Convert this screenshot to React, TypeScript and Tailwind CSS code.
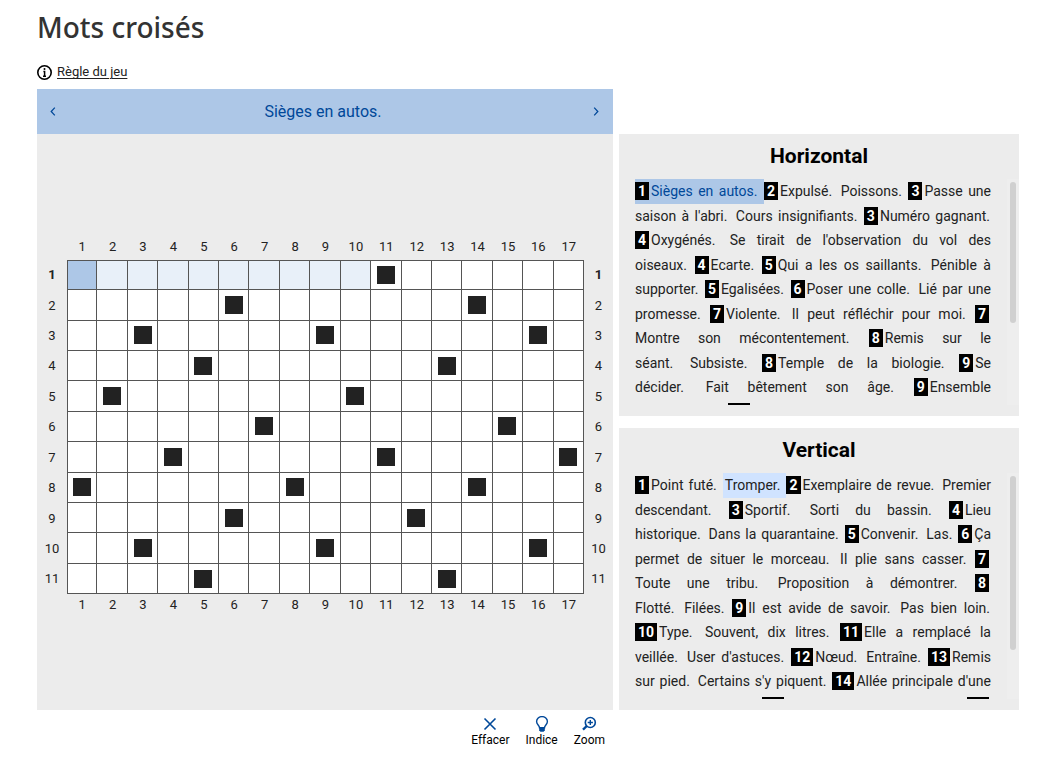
import React, { useState } from "react";

// "keep" holds the number and the first word of a clue on the same line.
type Clue = { n: number; texts: string[]; keep?: boolean };

const horizontal: Clue[] = [
  { n: 1, texts: ["Sièges en autos."] },
  { n: 2, texts: ["Expulsé.", "Poissons."] },
  { n: 3, texts: ["Passe une saison à l'abri.", "Cours insignifiants."] },
  { n: 3, texts: ["Numéro gagnant."] },
  { n: 4, texts: ["Oxygénés.", "Se tirait de l'observation du vol des oiseaux."] },
  { n: 4, texts: ["Ecarte."] },
  { n: 5, texts: ["Qui a les os saillants.", "Pénible à supporter."] },
  { n: 5, texts: ["Egalisées."] },
  { n: 6, texts: ["Poser une colle.", "Lié par une promesse."] },
  { n: 7, texts: ["Violente.", "Il peut réfléchir pour moi."] },
  { n: 7, texts: ["Montre son mécontentement."] },
  { n: 8, texts: ["Remis sur le séant.", "Subsiste."] },
  { n: 8, texts: ["Temple de la biologie."] },
  { n: 9, texts: ["Se décider.", "Fait bêtement son âge."] },
  { n: 9, texts: ["Ensemble d'instruments."] },
  { n: 10, texts: ["Petit cours.", "Mis à sec."] },
];

const vertical: Clue[] = [
  { n: 1, texts: ["Point futé.", "Tromper."] },
  { n: 2, texts: ["Exemplaire de revue.", "Premier descendant."] },
  { n: 3, texts: ["Sportif.", "Sorti du bassin."] },
  { n: 4, texts: ["Lieu historique.", "Dans la quarantaine."] },
  { n: 5, texts: ["Convenir.", "Las."] },
  { n: 6, texts: ["Ça permet de situer le morceau.", "Il plie sans casser."] },
  { n: 7, texts: ["Toute\u00a0une tribu.", "Proposition à démontrer."] },
  { n: 8, texts: ["Flotté.", "Filées."] },
  { n: 9, texts: ["Il est avide de savoir.", "Pas bien loin."] },
  { n: 10, texts: ["Type.", "Souvent, dix litres."], keep: true },
  { n: 11, texts: ["Elle a remplacé la veillée.", "User d'astuces."] },
  { n: 12, texts: ["Nœud.", "Entraîne."] },
  { n: 13, texts: ["Remis sur pied.", "Certains s'y piquent."] },
  { n: 14, texts: ["Allée principale d'une maison.", "Il est dure."] },
  { n: 15, texts: ["Mis en terre.", "Fin de journée."] },
  { n: 16, texts: ["Particulièrement.", "Sujet."] },
];

const COLS = Array.from({ length: 17 }, (_, i) => i + 1);

const blocks: number[][] = [
  [11], [6, 14], [3, 9, 16], [5, 13], [2, 10], [7, 15], [4, 11, 17], [1, 8, 14], [6, 12], [3, 9, 16], [5, 13],
];

function ClueList({ title, clues, active, crossing, thumb }: {
  title: string;
  clues: Clue[];
  active?: string;
  crossing?: string;
  thumb: string;
}) {
  return (
    <section className="flex min-h-0 flex-1 flex-col bg-[#ececec] pb-[11px]">
      <h2 className="pt-2 text-center text-[21px] leading-7 font-bold text-black">{title}</h2>
      <div className="relative mt-[9px] min-h-0 flex-1">
        <div className="absolute inset-0 overflow-hidden pr-7 pl-4">
          <p className="text-justify text-[14px] leading-[1.75] text-[#222]">
            {clues.map((clue, i) => (
              <span key={i} className={clue.texts[0] === active ? "bg-[#adc7e7] py-[5px] text-[#004899]" : ""}>
                <b className="mr-[2px] bg-black px-[3px] py-px font-bold text-white">{clue.n}</b>
                {!clue.keep && <wbr />}
                {clue.texts.map((text, j) => (
                  <span key={j} className={text === crossing ? "bg-[#d0e3ff] py-[5px] pr-px pl-[2px]" : j > 0 ? "pr-px pl-[2px]" : "pr-px"}>
                    {text + (j < clue.texts.length - 1 ? "\u00a0" : " ")}
                  </span>
                ))}
              </span>
            ))}
          </p>
        </div>
        <div className="absolute inset-y-0 right-0 w-3 bg-[#eeeeee]">
          <div className={"mt-[3px] ml-[3px] w-[6px] rounded-full bg-[#d0d0d0] " + thumb} />
        </div>
      </div>
    </section>
  );
}

function ColumnLabels({ className }: { className: string }) {
  return (
    <div className={"grid grid-cols-[30px_repeat(17,minmax(0,1fr))_29px] items-center text-center " + className}>
      <span />
      {COLS.map((c) => <span key={c}>{c}</span>)}
      <span />
    </div>
  );
}

function Board() {
  const [letters, setLetters] = useState<Record<string, string>>({});
  return (
    <div className="pt-1 text-[13px] text-[#222]">
      <ColumnLabels className="h-[26px]" />
      {blocks.map((row, r) => {
        const label = r === 0 ? "text-center font-bold" : "text-center";
        return (
          <div key={r} className="grid grid-cols-[30px_repeat(17,minmax(0,1fr))_29px] items-center">
            <span className={label}>{r + 1}</span>
            {COLS.map((c) => {
              const key = r + "-" + c;
              const edges =
                "flex aspect-square items-center justify-center border-[#555] " +
                (c === 1 ? "border-l " : "") + (r === 0 ? "border-t " : "") + "border-r border-b ";
              if (row.includes(c)) {
                return (
                  <div key={c} className={edges + "bg-white"}>
                    <div className="size-[18px] bg-[#222]" />
                  </div>
                );
              }
              const fill = r === 0 && c === 1 ? "bg-[#adc7e7]" : r === 0 && c < 11 ? "bg-[#e8f0f9]" : "bg-white";
              return (
                <div key={c} className={edges + fill}>
                  <input
                    aria-label={"Ligne " + (r + 1) + ", colonne " + c}
                    maxLength={1}
                    value={letters[key] ?? ""}
                    onChange={(e) => setLetters({ ...letters, [key]: e.target.value.toUpperCase() })}
                    className="size-full bg-transparent text-center text-base outline-none"
                  />
                </div>
              );
            })}
            <span className={label}>{r + 1}</span>
          </div>
        );
      })}
      <ColumnLabels className="h-5" />
    </div>
  );
}

function Chevron({ d }: { d: string }) {
  return (
    <svg viewBox="0 0 6 10" className="h-[9px] w-[6px]" fill="none" stroke="#004899" strokeWidth="1.4">
      <path d={d} />
    </svg>
  );
}

export default function App() {
  return (
    <main className="bg-white pt-[7px] pr-[25px] pl-[37px] font-['Roboto',sans-serif]">
      <h1 className="font-['Noto_Sans',sans-serif] text-[28px] leading-10 font-medium text-[#333]">Mots croisés</h1>
      <a href="#regle" className="mt-[15px] flex h-5 items-center gap-[5px] text-[13px] text-[#222]">
        <svg viewBox="0 0 15 15" className="size-[15px]" fill="none" stroke="#000">
          <circle cx="7.5" cy="7.5" r="6.7" strokeWidth="1.6" />
          <circle cx="7.5" cy="4" r="1" fill="#000" stroke="none" />
          <path d="M6.4 6.4h1.2v5M6 11.3h3" strokeWidth="1.5" />
        </svg>
        <span className="underline underline-offset-2">Règle du jeu</span>
      </a>

      <div className="mt-[7px] grid grid-cols-[minmax(0,576fr)_minmax(0,400fr)] gap-x-[6px]">
        <div className="flex h-[45px] items-center justify-between bg-[#adc7e7] pr-[14px] pl-[13px] text-[#004899]">
          <button type="button" aria-label="Définition précédente"><Chevron d="M5 .7 1 5l4 4.3" /></button>
          <span className="pr-[3px] text-base">Sièges en autos.</span>
          <button type="button" aria-label="Définition suivante"><Chevron d="M1 .7 5 5 1 9.3" /></button>
        </div>
        <div />
        <div className="flex aspect-square flex-col justify-center bg-[#ececec]">
          <Board />
        </div>
        <div className="flex flex-col gap-3">
          <ClueList title="Horizontal" clues={horizontal} active="Sièges en autos." thumb="h-[141px]" />
          <ClueList title="Vertical" clues={vertical} crossing="Tromper." thumb="h-[174px]" />
        </div>
        <div className="flex justify-end gap-4 pt-[6px] pr-2 text-xs text-black">
          <button type="button" className="flex flex-col items-center">
            <svg viewBox="0 0 16 16" className="size-4" fill="none" stroke="#004899" strokeWidth="1.6">
              <path d="M2.5 2.5l11 11M13.5 2.5l-11 11" />
            </svg>
            Effacer
          </button>
          <button type="button" className="flex flex-col items-center">
            <svg viewBox="0 0 16 16" className="size-4" fill="none" stroke="#004899" strokeWidth="1.4">
              <path d="M5.5 11.8C5.5 9.3 2.6 8.6 2.6 5.6a5.4 5 0 0 1 10.8 0c0 3-2.9 3.7-2.9 6.2z" />
              <path d="M5.2 12h5.6v2.2l-1.2 1.6H6.4l-1.2-1.6z" fill="#004899" stroke="none" />
            </svg>
            Indice
          </button>
          <button type="button" className="flex flex-col items-center">
            <svg viewBox="0 0 16 16" className="size-4" fill="none" stroke="#004899">
              <circle cx="9.3" cy="6.5" r="5" strokeWidth="1.6" />
              <path d="M9.3 3.9v5.2M6.7 6.5h5.2" strokeWidth="1.4" />
              <path d="M5.8 10 2 13.6" strokeWidth="2.4" />
            </svg>
            Zoom
          </button>
        </div>
      </div>
    </main>
  );
}
